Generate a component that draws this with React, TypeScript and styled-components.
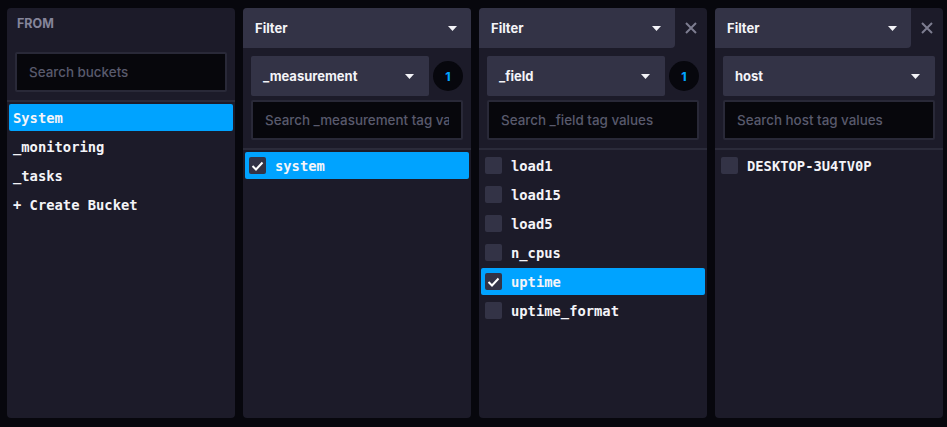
import React from "react";
import styled, { createGlobalStyle } from "styled-components";

const GlobalStyle = createGlobalStyle`
    html, body {
        margin: 0;
        padding: 0;
        background-color: #07070d;
    }
    * {
        box-sizing: border-box;
    }
`;

const Container = styled.div`
    display: flex;
    gap: 8px;
    padding: 8px 4px 0 7px;
    width: 947px;
    height: 427px;
    background-color: #07070d;
    font-family: Inter, "Noto Sans", sans-serif;
`;
const Panel = styled.div`
    display: flex;
    flex-direction: column;
    width: 228px;
    height: 410px;
    background-color: #1c1b29;
    border-radius: 4px;
`;
const FromTitle = styled.div`
    height: 44px;
    padding: 9px 10px 0;
    font-size: 12.5px;
    font-weight: 700;
    line-height: 14px;
    color: #85859a;
`;
const Header = styled.div`
    display: flex;
    height: 40px;
`;
const HeaderBar = styled.div<{ closable?: boolean }>`
    flex: 1;
    display: flex;
    align-items: center;
    justify-content: space-between;
    padding: 0 14px 0 12px;
    background-color: #333346;
    border-radius: ${(p) => (p.closable ? "4px 0 4px 0" : "4px 4px 0 0")};
    font-size: 13px;
    font-weight: 700;
    color: #f4f4f8;
`;
const CloseBtn = styled.div`
    width: 32px;
    display: flex;
    align-items: center;
    justify-content: center;
`;
const Controls = styled.div<{ flush?: boolean }>`
    display: flex;
    flex-direction: column;
    gap: 4px;
    padding: ${(p) => (p.flush ? "0 8px" : "8px 8px 0")};
`;
const SelectRow = styled.div`
    display: flex;
    align-items: center;
    gap: 4px;
`;
const Dropdown = styled.div`
    flex: 1;
    height: 40px;
    display: flex;
    align-items: center;
    justify-content: space-between;
    padding: 0 15px 0 12px;
    background-color: #333346;
    border-radius: 2px;
    font-size: 13px;
    font-weight: 700;
    color: #f4f4f8;
`;
const Badge = styled.div`
    width: 30px;
    height: 30px;
    border-radius: 50%;
    background-color: #07070d;
    display: flex;
    align-items: center;
    justify-content: center;
    font-size: 12px;
    font-weight: 800;
    color: #00a3ff;
`;
const Search = styled.input`
    width: 100%;
    height: 40px;
    padding: 0 12px;
    background-color: #07070c;
    border: 2px solid #292938;
    border-radius: 2px;
    font-family: Inter, "Noto Sans", sans-serif;
    font-size: 13.4px;
    font-weight: 500;
    color: #f4f4f8;
    outline: none;
    &::placeholder {
        color: #595a6d;
    }
`;
const Divider = styled.div`
    height: 2px;
    margin-top: 8px;
    background-color: #2b2b3a;
`;
const List = styled.div`
    display: flex;
    flex-direction: column;
    gap: 2px;
    padding: 2px;
`;
const Row = styled.div<{ selected?: boolean }>`
    display: flex;
    align-items: center;
    gap: 9px;
    height: 27px;
    padding: 0 4px;
    border-radius: 2px;
    background-color: ${(p) => (p.selected ? "#00a3ff" : "transparent")};
    font-family: "DejaVu Sans Mono", "Liberation Mono", monospace;
    font-size: 13.8px;
    font-weight: 700;
    color: #f4f4f8;
    white-space: nowrap;
`;
const Box = styled.div`
    width: 17px;
    height: 17px;
    border-radius: 2px;
    background-color: #333346;
    display: flex;
    align-items: center;
    justify-content: center;
`;

const Caret = () => (
    <svg width="9" height="5" viewBox="0 0 9 5">
        <path d="M0 0h9L4.5 5z" fill="#f4f4f8" />
    </svg>
);
const Cross = () => (
    <svg width="12" height="12" viewBox="0 0 12 12">
        <path d="M1 1l10 10M11 1L1 11" stroke="#7d7d90" strokeWidth="2" />
    </svg>
);
const Check = () => (
    <svg width="13" height="10" viewBox="0 0 13 10">
        <path d="M1.5 5l3.5 3.5L11.5 1.5" stroke="#fff" strokeWidth="2" fill="none" />
    </svg>
);

type FilterProps = {
    tag: string;
    count?: number;
    closable?: boolean;
    items: string[];
    checked: string[];
};

const FilterPanel = ({ tag, count, closable, items, checked }: FilterProps) => (
    <Panel>
        <Header>
            <HeaderBar closable={closable}>
                Filter
                <Caret />
            </HeaderBar>
            {closable && (
                <CloseBtn>
                    <Cross />
                </CloseBtn>
            )}
        </Header>
        <Controls>
            <SelectRow>
                <Dropdown>
                    {tag}
                    <Caret />
                </Dropdown>
                {count ? <Badge>{count}</Badge> : null}
            </SelectRow>
            <Search placeholder={`Search ${tag} tag values`} />
        </Controls>
        <Divider />
        <List>
            {items.map((item) => (
                <Row key={item} selected={checked.includes(item)}>
                    <Box>{checked.includes(item) && <Check />}</Box>
                    {item}
                </Row>
            ))}
        </List>
    </Panel>
);

function App() {
    const buckets = ["System", "_monitoring", "_tasks", "+ Create Bucket"];
    return (
        <Container>
            <GlobalStyle />
            <Panel>
                <FromTitle>FROM</FromTitle>
                <Controls flush>
                    <Search placeholder="Search buckets" />
                </Controls>
                <Divider />
                <List>
                    {buckets.map((b, i) => (
                        <Row key={b} selected={i === 0}>
                            {b}
                        </Row>
                    ))}
                </List>
            </Panel>
            <FilterPanel tag="_measurement" count={1} items={["system"]} checked={["system"]} />
            <FilterPanel
                tag="_field"
                count={1}
                closable
                items={["load1", "load15", "load5", "n_cpus", "uptime", "uptime_format"]}
                checked={["uptime"]}
            />
            <FilterPanel tag="host" closable items={["DESKTOP-3U4TV0P"]} checked={[]} />
        </Container>
    );
}

export default App;
